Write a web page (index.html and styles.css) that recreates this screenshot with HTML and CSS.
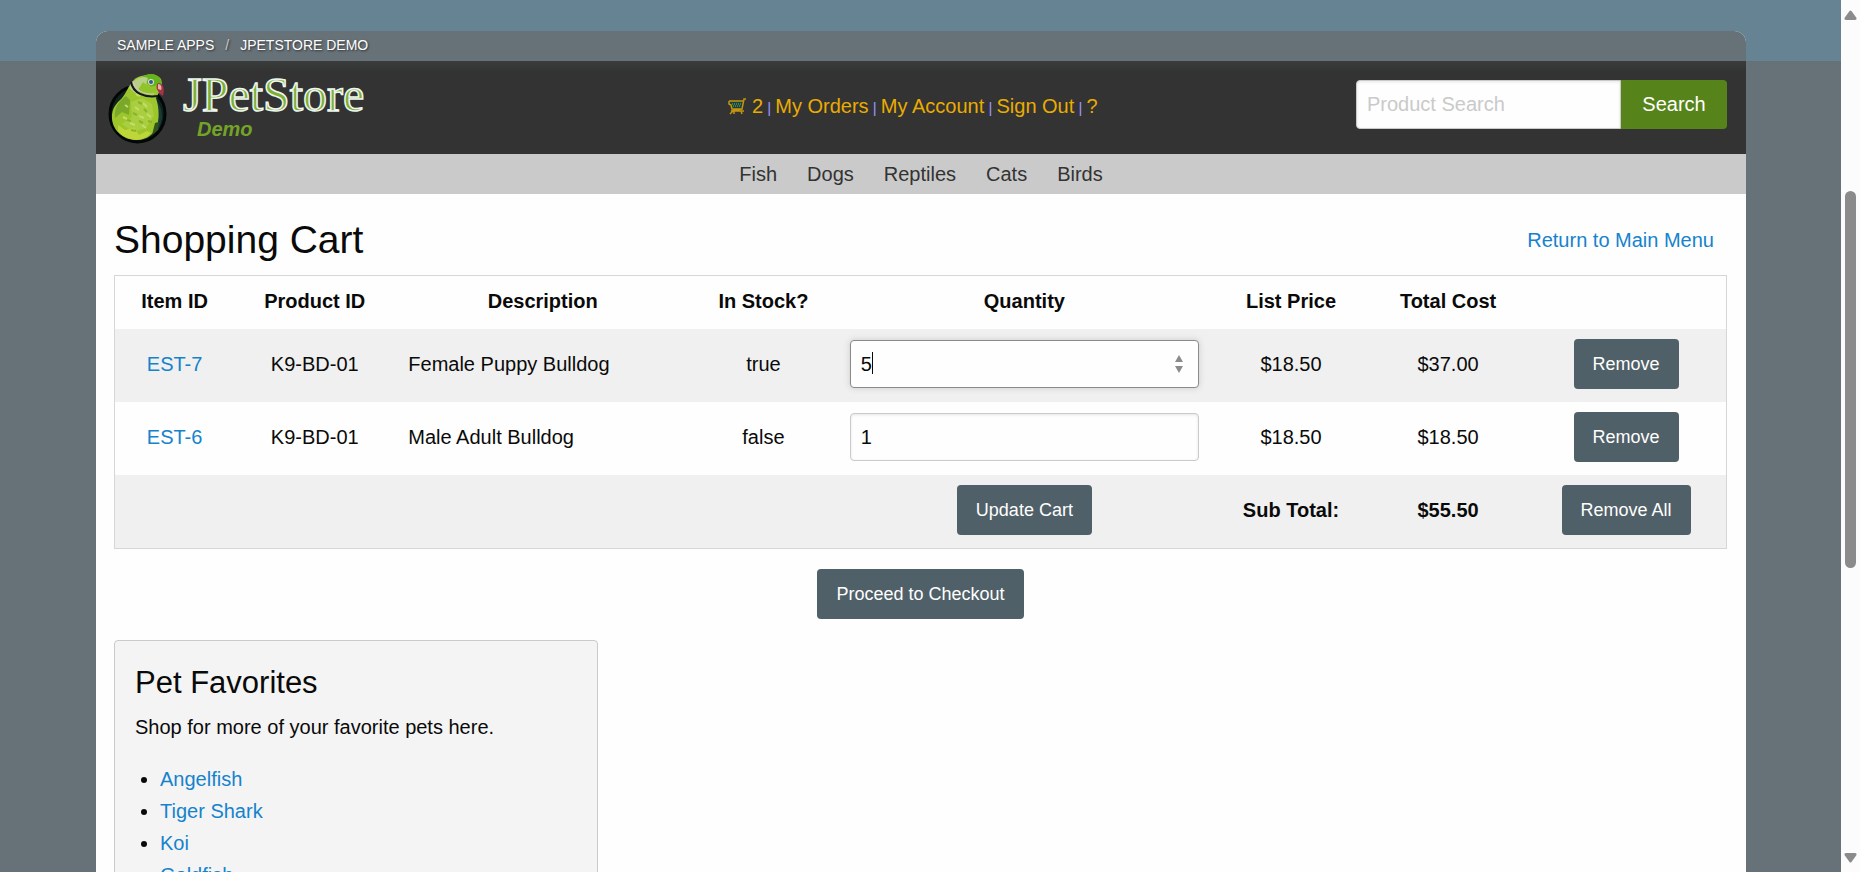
FILE: index.html
```html
<!DOCTYPE html>
<html lang="en">
<head>
<meta charset="utf-8">
<title>JPetStore Demo</title>
<link rel="stylesheet" href="styles.css">
</head>
<body>
<div class="viewport">
  <div class="page">
    <div class="container">
      <nav class="crumbs" aria-label="Breadcrumb">
        <a href="#">SAMPLE APPS</a>
        <span class="crumb-sep">/</span>
        <a href="#">JPETSTORE DEMO</a>
      </nav>

      <header class="header">
        <a class="logo" href="#" aria-label="JPetStore Demo">
          <svg width="270" height="87" viewBox="0 -7 270 87">
            <ellipse cx="29.500" cy="44" rx="27.500" ry="28" fill="#10231f" stroke="#020606" stroke-width="3"/>
            <path d="M42 26Q54 32 54 47Q53 58 46 63L42 44Z" fill="#193a38"/>
            <path d="M25 11C29 6 34 6 38 5C44 3 50 5 53 9C55 14 52 21 48 28C51 37 52 50 48 58C44 67 36 70 28 70C16 70 5 61 4 49C3 38 9 33 14 28C19 22 20 16 25 11Z" fill="#9dc52c"/>
            <path d="M38 5C46 2 54 7 54 15L49 19C42 18 39 12 32 8Z" fill="#63b51b"/>
            <path d="M25 12C30 7 36 6 40 8L37 18L28 24L21 18Z" fill="#b7cf86"/>
            <path d="M30 20C36 24 43 24 49 20L51 15L41 17L35 12Z" fill="#8fc42a"/>
            <path d="M18 26C10 32 6 38 7 48L14 42L21 45L22 30Z" fill="#79a82a"/>
            <path d="M23 32L34 28L44 34L46 46L38 58L25 62L14 54L24 47Z" fill="#a9ce40"/>
            <path d="M10 55L17 60L26 58L31 65L39 61L43 63Q37 70 28 70Q16 69 10 61Z" fill="#bfd63b"/>
            <path d="M27 37l4 3M35 33l4 4M31 46l5 2M39 44l4 3M22 53l5 2M34 55l4 3M15 47l4 2M28 24l4 2M17 35l3 2" stroke="#c5dc66" stroke-width="2"/>
            <path d="M30 32l4 2M25 43l4 2M36 39l3 3M19 50l4 1M31 51l4 2M40 51l4 1M23 60l5 1" stroke="#8bb329" stroke-width="2"/>
            <path d="M47 53l4-1l-1 8l-6 5z" fill="#31551c"/>
            <path d="M23 12C25 23 36 28 50 26" fill="none" stroke="#101820" stroke-width="2"/>
            <path d="M25 11C27 20 36 25 46 24" fill="none" stroke="#dfc3c4" stroke-width="1"/>
            <circle cx="43" cy="12" r="3" fill="#d8dfd0"/>
            <circle cx="43" cy="12" r="2" fill="#39588b"/>
            <path d="M50 13C55 13 57 18 55 26C53 24 51 24 50 21C48 19 48 15 50 13Z" fill="#a93346"/>
            <path d="M50 14C53 14 54 17 53 20L50 19Z" fill="#e6b3ac"/>
            <text class="logo-name" x="75" y="41">JPetStore</text>
            <text class="logo-demo" x="89" y="66">Demo</text>
          </svg>
        </a>

        <nav class="account" aria-label="Account">
          <a class="cart" href="#"><svg class="cart-icon" width="18" height="17" viewBox="0 0 18 17">
            <path d="M1 3H15L14 11H4Z" fill="#17453a"/>
            <path d="M1 3H15.500M1 3V6L3 7L4 11H14M18 1H16L14 11L3 13H16M5 13L2 16M6 13L6 16M13 13L14 16" fill="none" stroke="#c39412" stroke-width="1.500"/>
            <path d="M4 6H14M5 8H13" stroke="#94a565" stroke-dasharray="1 1"/>
          </svg> 2</a><span class="bar"> | </span><a href="#">My Orders</a><span class="bar"> | </span><a href="#">My Account</a><span class="bar"> | </span><a href="#">Sign Out</a><span class="bar"> | </span><a href="#">?</a>
        </nav>

        <form class="search">
          <input class="search-box" type="text" placeholder="Product Search" aria-label="Product Search">
          <button class="search-button" type="button">Search</button>
        </form>
      </header>

      <nav class="categories" aria-label="Categories">
        <a href="#">Fish</a>
        <a href="#">Dogs</a>
        <a href="#">Reptiles</a>
        <a href="#">Cats</a>
        <a href="#">Birds</a>
      </nav>

      <main class="content">
        <div class="title-row">
          <h1 class="title">Shopping Cart</h1>
          <a class="link" href="#">Return to Main Menu</a>
        </div>

        <table class="cart-table">
          <colgroup>
            <col class="col-item"><col class="col-product"><col class="col-description"><col class="col-stock">
            <col class="col-quantity"><col class="col-price"><col class="col-total"><col class="col-action">
          </colgroup>
          <thead>
            <tr>
              <th>Item ID</th><th>Product ID</th><th>Description</th><th>In Stock?</th>
              <th>Quantity</th><th>List Price</th><th>Total Cost</th><th></th>
            </tr>
          </thead>
          <tbody>
            <tr>
              <td><a class="link" href="#">EST-7</a></td>
              <td>K9-BD-01</td>
              <td class="description">Female Puppy Bulldog</td>
              <td>true</td>
              <td>
                <div class="quantity">
                  <input class="quantity-box is-active" type="number" value="5" aria-label="Quantity of EST-7">
                  <span class="caret"></span>
                  <svg class="spinner" width="10" height="18" viewBox="0 0 10 18"><path d="M5 0L9 7H1ZM5 18L9 11H1Z" fill="#8b8b8b"/></svg>
                </div>
              </td>
              <td>$18.50</td>
              <td>$37.00</td>
              <td><button class="button" type="button">Remove</button></td>
            </tr>
            <tr>
              <td><a class="link" href="#">EST-6</a></td>
              <td>K9-BD-01</td>
              <td class="description">Male Adult Bulldog</td>
              <td>false</td>
              <td>
                <div class="quantity">
                  <input class="quantity-box" type="number" value="1" aria-label="Quantity of EST-6">
                </div>
              </td>
              <td>$18.50</td>
              <td>$18.50</td>
              <td><button class="button" type="button">Remove</button></td>
            </tr>
            <tr>
              <td></td><td></td><td></td><td></td>
              <td><button class="button" type="button">Update Cart</button></td>
              <th>Sub Total:</th>
              <th>$55.50</th>
              <td><button class="button" type="button">Remove All</button></td>
            </tr>
          </tbody>
        </table>

        <div class="checkout">
          <button class="button" type="button">Proceed to Checkout</button>
        </div>

        <section class="favorites">
          <h2 class="favorites-title">Pet Favorites</h2>
          <p class="favorites-text">Shop for more of your favorite pets here.</p>
          <ul class="favorites-list">
            <li><a class="link" href="#">Angelfish</a></li>
            <li><a class="link" href="#">Tiger Shark</a></li>
            <li><a class="link" href="#">Koi</a></li>
            <li><a class="link" href="#">Goldfish</a></li>
          </ul>
        </section>
      </main>
    </div>
  </div>

  <div class="scrollbar" aria-hidden="true">
    <svg width="13" height="10" viewBox="0 0 13 10"><path d="M5.500 1Q6.500 0 7.500 1L12.500 8Q13 10 11 10H2Q0 10 .5 8Z" fill="#8b8b8b"/></svg>
    <div class="scroll-track"><div class="scroll-thumb"></div></div>
    <svg width="13" height="10" viewBox="0 0 13 10"><path d="M5.500 9Q6.500 10 7.500 9L12.500 2Q13 0 11 0H2Q0 0 .5 2Z" fill="#8b8b8b"/></svg>
  </div>
</div>
</body>
</html>
```

FILE: styles.css
```css
* {
  box-sizing: border-box;
}

body {
  margin: 0;
  font-family: "Liberation Sans", Arial, sans-serif;
  font-size: 20px;
  line-height: 30px;
  color: #0a0a0a;
}

a {
  color: inherit;
  text-decoration: none;
}

button,
input {
  margin: 0;
  font-family: inherit;
}

.viewport {
  display: flex;
  height: 100vh;
  overflow: hidden;
}

.page {
  flex: 1;
  padding: 31px 95px 0 96px;
  background: linear-gradient(#668394 61px, #667178 61px);
}

.container {
  min-height: 100%;
  overflow: hidden;
  border-radius: 12px 12px 0 0;
  background: #fefefe;
}

.crumbs {
  display: flex;
  gap: 11px;
  height: 30px;
  padding: 0 21px;
  background: #667178;
  color: #fefefe;
  font-size: 14px;
  line-height: 28px;
  text-shadow: 1px 1px 2px #333;
}

.crumb-sep {
  color: #cacaca;
}

.header {
  display: grid;
  grid-template-columns: 1fr auto 1fr;
  align-items: center;
  padding: 2px 19px 4px 12px;
  background: linear-gradient(#3a3d3c, #333 10px);
}

.logo,
.logo svg {
  display: block;
}

.logo-name {
  font-family: "Liberation Serif", serif;
  font-size: 48px;
  fill: #7fae34;
  stroke: #eef6f2;
  stroke-width: 1.5px;
}

.logo-demo {
  font-size: 20px;
  font-weight: bold;
  font-style: italic;
  fill: #73a428;
}

.account {
  padding: 1px 9px 0 0;
  color: #eaac00;
  white-space: nowrap;
}

.cart-icon {
  vertical-align: -2px;
}

.bar {
  color: #99f;
  font-size: 15px;
}

.search {
  display: flex;
  justify-self: end;
  padding-bottom: 4px;
}

.search-box,
.search-button {
  height: 49px;
  font-size: 20px;
}

.search-box {
  width: 265px;
  padding: 0 10px;
  border: 1px solid #cacaca;
  border-radius: 4px 0 0 4px;
  background: #fefefe;
  box-shadow: inset 0 1px 3px rgba(10, 10, 10, 0.1);
}

.search-box::placeholder {
  color: #cacaca;
}

.search-button {
  width: 106px;
  padding: 0;
  border: 0;
  border-radius: 0 4px 4px 0;
  background: #57841a;
  color: #fefefe;
}

.categories {
  display: flex;
  justify-content: center;
  gap: 30px;
  padding: 5px 0;
  background: #cacaca;
  color: #333;
}

.content {
  padding: 19px 19px 0 18px;
}

.title-row {
  display: flex;
  justify-content: space-between;
  align-items: center;
  padding: 0 13px 8px 0;
}

.title {
  margin: 0;
  font-size: 39px;
  font-weight: normal;
  line-height: 54px;
}

.link {
  color: #1583cc;
}

.cart-table {
  width: 100%;
  border: 1px solid #d5d6d6;
  border-collapse: separate;
  border-spacing: 0;
  table-layout: fixed;
}

.col-item { width: 7.4%; }
.col-product { width: 10%; }
.col-description { width: 18.3%; }
.col-stock { width: 9.1%; }
.col-quantity { width: 23.3%; }
.col-price { width: 9.8%; }
.col-total { width: 9.7%; }
.col-action { width: 12.4%; }

.cart-table th,
.cart-table td {
  padding: 10px 13px 13px;
  text-align: center;
  vertical-align: middle;
}

.cart-table .description {
  text-align: left;
}

.cart-table tbody tr:nth-child(odd) {
  background: #f0f0f0;
}

.quantity {
  position: relative;
}

.quantity-box {
  display: block;
  width: 100%;
  height: 48px;
  padding: 0 10px;
  border: 1px solid #cacaca;
  border-radius: 4px;
  background: #fefefe;
  box-shadow: inset 0 1px 3px rgba(10, 10, 10, 0.1);
  color: #0a0a0a;
  font-size: 20px;
  appearance: textfield;
}

.quantity-box.is-active {
  border-color: #8a8a8a;
  box-shadow: 0 0 6px #cacaca;
}

.caret {
  position: absolute;
  top: 12px;
  left: 22px;
  width: 1px;
  height: 22px;
  background: #0a0a0a;
}

.spinner {
  position: absolute;
  top: 15px;
  right: 15px;
}

.button {
  display: block;
  height: 50px;
  margin: 0 auto;
  padding: 0 19px;
  border: 0;
  border-radius: 4px;
  background: #506068;
  color: #fefefe;
  font-size: 18px;
}

.checkout {
  padding: 20px 0 21px;
}

.favorites {
  width: 30%;
  padding: 21px 20px;
  border: 1px solid #cacaca;
  border-radius: 4px;
  background: #f4f4f4;
}

.favorites-title {
  margin: 0 0 7px;
  font-size: 31px;
  font-weight: normal;
  line-height: 42px;
}

.favorites-text {
  margin: 0 0 20px;
  line-height: 32px;
}

.favorites-list {
  margin: 0;
  padding-left: 25px;
  line-height: 32px;
}

.scrollbar {
  display: flex;
  flex-direction: column;
  align-items: center;
  width: 19px;
  padding: 10px 0 9px;
  background: #fcfcfc;
}

.scroll-track {
  flex: 1;
  padding-top: 171px;
}

.scroll-thumb {
  width: 11px;
  height: 57%;
  border-radius: 6px;
  background: #8b8b8b;
}
```
